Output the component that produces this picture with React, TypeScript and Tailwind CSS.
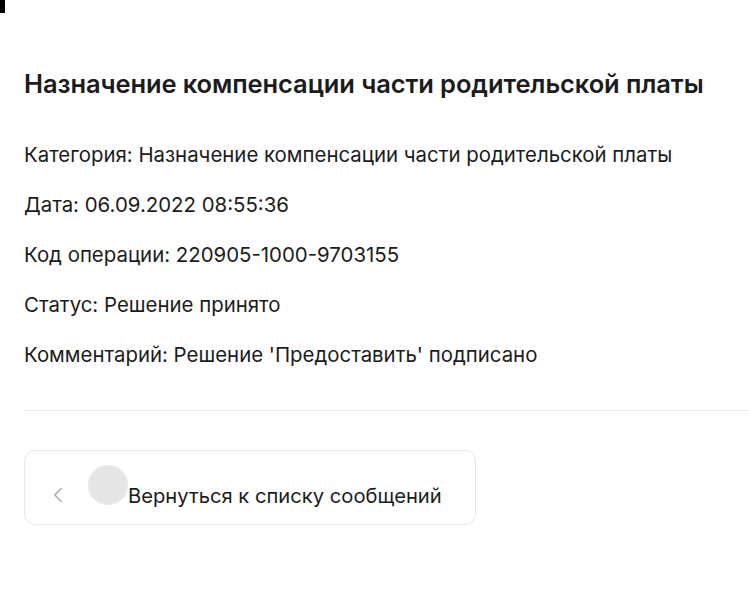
import { ChevronLeft } from 'lucide-react';

const rows = [
	'Категория: Назначение компенсации части родительской платы',
	'Дата: 06.09.2022 08:55:36',
	'Код операции: 220905-1000-9703155',
	'Статус: Решение принято',
	"Комментарий: Решение 'Предоставить' подписано",
];

export default function App() {
	return (
		<div className="relative min-h-[600px] w-full overflow-hidden bg-white font-['Inter',sans-serif] text-[#1c1c1c]">
			<div className="absolute left-0 top-0 h-[13px] w-[5px] bg-black" />

			<div className="pl-6 pt-[69px]">
				<h1 className="text-[25.5px] font-semibold leading-[30px] tracking-[-0.1px]">
					Назначение компенсации части родительской платы
				</h1>

				<div className="mt-[42px] flex flex-col gap-[22px]">
					{rows.map((row) => (
						<p key={row} className="text-[20.4px] leading-[28px]">
							{row}
						</p>
					))}
				</div>

				<div className="mt-[41px] h-px bg-[#ececec]" />

				<button
					type="button"
					className="mt-[39px] flex h-[75px] w-[452px] items-start rounded-[11px] border border-[#e8e8e8] bg-white text-left"
				>
					<ChevronLeft className="ml-[20px] mt-[31px] h-[26px] w-[26px] shrink-0 text-[#acacac]" strokeWidth={1.4} />
					<span className="ml-[17px] mt-[14px] h-[40px] w-[40px] shrink-0 rounded-full bg-[#e6e6e6]" />
					<span className="mt-[31px] text-[20.2px] leading-[28px]">Вернуться к списку сообщений</span>
				</button>
			</div>
		</div>
	);
}
